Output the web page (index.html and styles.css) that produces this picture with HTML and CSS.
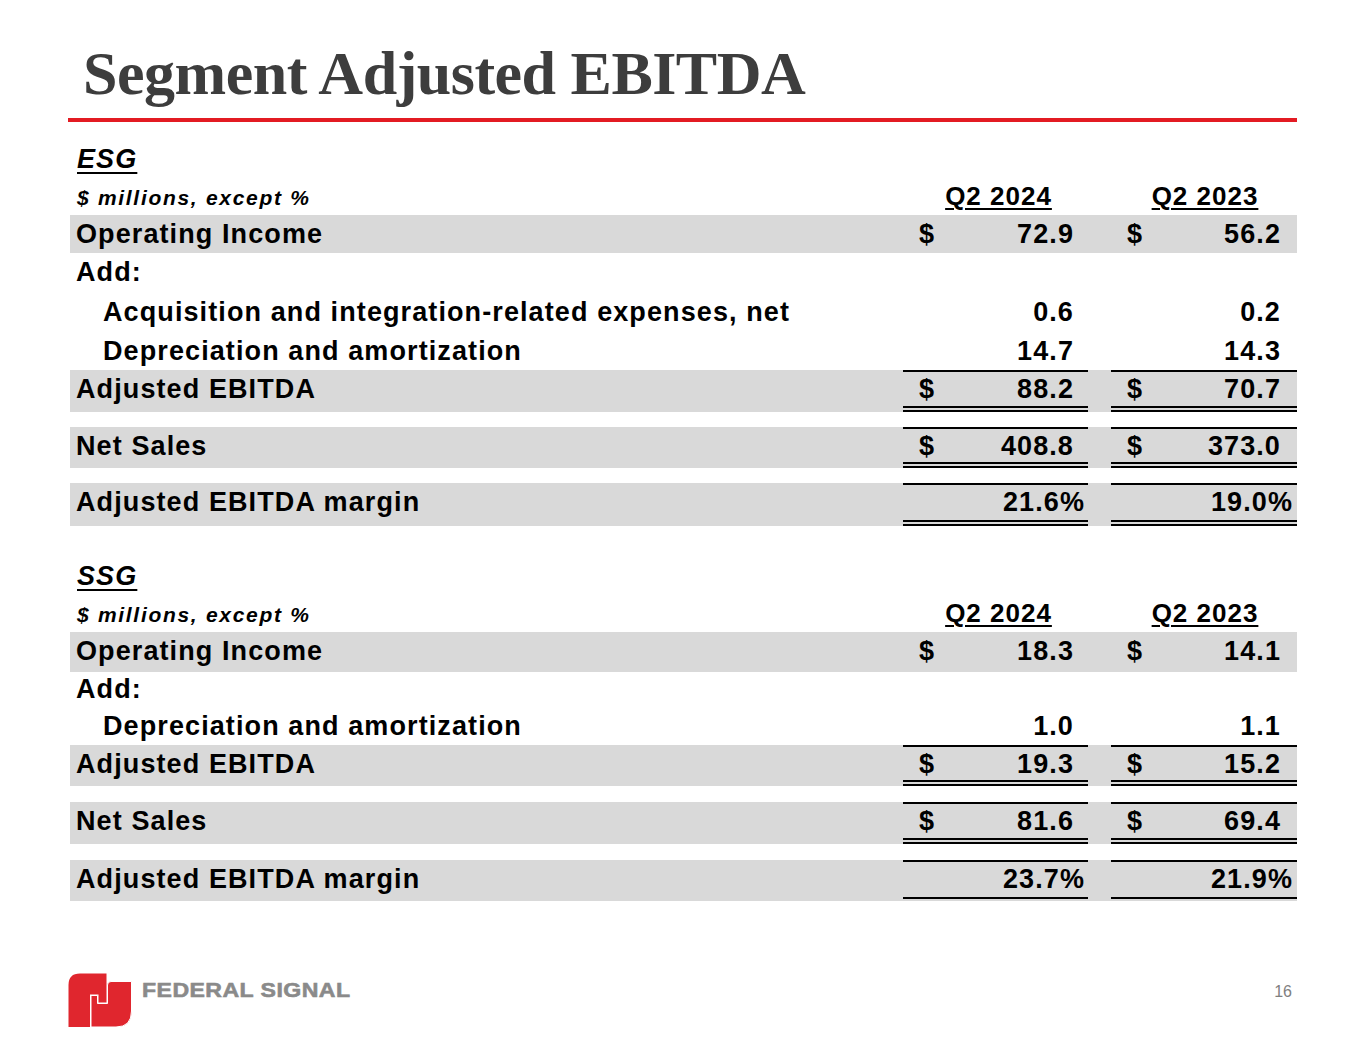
FILE: index.html
```html
<!DOCTYPE html>
<html>
<head>
<meta charset="utf-8">
<link rel="stylesheet" href="styles.css">
</head>
<body>
<div class="slide">
  <h1 class="title">Segment Adjusted EBITDA</h1>
  <div class="rule"></div>

  <section class="seg esg">
    <div class="row seg-name"><span class="name">ESG</span></div>
    <div class="row head">
      <div class="label unit">$ millions, except %</div>
      <div class="col hcol"><span class="hdr">Q2 2024</span></div>
      <div class="col hcol c2"><span class="hdr">Q2 2023</span></div>
    </div>
    <div class="row gray h38">
      <div class="label">Operating Income</div>
      <div class="col"><span class="cur">$</span><span class="num">72.9</span></div>
      <div class="col c2"><span class="cur">$</span><span class="num">56.2</span></div>
    </div>
    <div class="row h38">
      <div class="label">Add:</div>
      <div class="col"></div>
      <div class="col c2"></div>
    </div>
    <div class="row h41">
      <div class="label ind mid">Acquisition and integration-related expenses, net</div>
      <div class="col mid"><span class="num">0.6</span></div>
      <div class="col c2 mid"><span class="num">0.2</span></div>
    </div>
    <div class="row h38">
      <div class="label ind">Depreciation and amortization</div>
      <div class="col"><span class="num">14.7</span></div>
      <div class="col c2"><span class="num">14.3</span></div>
    </div>
    <div class="row gray h42 total">
      <div class="label">Adjusted EBITDA</div>
      <div class="col"><span class="cur">$</span><span class="num">88.2</span></div>
      <div class="col c2"><span class="cur">$</span><span class="num">70.7</span></div>
    </div>
    <div class="row gray h41 total gap">
      <div class="label">Net Sales</div>
      <div class="col"><span class="cur">$</span><span class="num">408.8</span></div>
      <div class="col c2"><span class="cur">$</span><span class="num">373.0</span></div>
    </div>
    <div class="row gray h43 total gap">
      <div class="label">Adjusted EBITDA margin</div>
      <div class="col pct"><span class="num">21.6%</span></div>
      <div class="col c2 pct"><span class="num">19.0%</span></div>
    </div>
  </section>

  <section class="seg ssg">
    <div class="row seg-name"><span class="name">SSG</span></div>
    <div class="row head">
      <div class="label unit">$ millions, except %</div>
      <div class="col hcol"><span class="hdr">Q2 2024</span></div>
      <div class="col hcol c2"><span class="hdr">Q2 2023</span></div>
    </div>
    <div class="row gray h40">
      <div class="label">Operating Income</div>
      <div class="col"><span class="cur">$</span><span class="num">18.3</span></div>
      <div class="col c2"><span class="cur">$</span><span class="num">14.1</span></div>
    </div>
    <div class="row h35">
      <div class="label short">Add:</div>
      <div class="col"></div>
      <div class="col c2"></div>
    </div>
    <div class="row h38">
      <div class="label ind">Depreciation and amortization</div>
      <div class="col"><span class="num">1.0</span></div>
      <div class="col c2"><span class="num">1.1</span></div>
    </div>
    <div class="row gray h41 total">
      <div class="label">Adjusted EBITDA</div>
      <div class="col"><span class="cur">$</span><span class="num">19.3</span></div>
      <div class="col c2"><span class="cur">$</span><span class="num">15.2</span></div>
    </div>
    <div class="row gray h42 total gap16">
      <div class="label">Net Sales</div>
      <div class="col"><span class="cur">$</span><span class="num">81.6</span></div>
      <div class="col c2"><span class="cur">$</span><span class="num">69.4</span></div>
    </div>
    <div class="row gray h41 total single gap16">
      <div class="label">Adjusted EBITDA margin</div>
      <div class="col pct"><span class="num">23.7%</span></div>
      <div class="col c2 pct"><span class="num">21.9%</span></div>
    </div>
  </section>

  <footer class="footer">
    <svg class="mark" width="66" height="54" viewBox="0 0 66 54">
      <path d="M1.5,54 V12 Q1.5,0.5 13,0.5 H39.5 V29.5 H31.5 V21.5 H23 V54 Z" fill="#e0262e"/>
      <path d="M24,54 V22.5 H30.5 V30.5 H40.5 V12 Q40.5,8.5 44,8.5 H64.5 V38 Q64.5,54 49,54 Z" fill="#e0262e" stroke="#ffffff" stroke-width="1"/>
    </svg>
    <span class="brand">FEDERAL SIGNAL</span>
    <span class="page">16</span>
  </footer>
</div>
</body>
</html>
```
FILE: styles.css
```css
* { box-sizing: border-box; }
html, body { margin: 0; padding: 0; background: #ffffff; }
.slide {
  width: 1365px;
  height: 1055px;
  display: flex;
  flex-direction: column;
  overflow: hidden;
  font-family: "Liberation Sans", Arial, sans-serif;
  color: #000;
}
.title {
  margin: 0;
  padding: 41px 0 0 83px;
  font-family: "Liberation Serif", "Times New Roman", serif;
  font-weight: bold;
  font-size: 62px;
  line-height: 64px;
  letter-spacing: -0.5px;
  color: #3d3d3d;
}
.rule {
  margin: 13px 0 0 68px;
  width: 1229px;
  height: 4px;
  background: #e31b23;
}
.seg {
  margin-left: 70px;
  width: 1227px;
  display: flex;
  flex-direction: column;
}
.esg { margin-top: 18px; }
.ssg { margin-top: 31px; }
.row {
  display: flex;
  align-items: stretch;
  font-weight: bold;
  font-size: 27px;
  letter-spacing: 1.1px;
}
.row.gray { background: #d9d9d9; }
.h35 { height: 35px; }
.h38 { height: 38px; }
.h40 { height: 40px; }
.h41 { height: 41px; }
.h42 { height: 42px; }
.h43 { height: 43px; }
.gap { margin-top: 15px; }
.gap16 { margin-top: 16px; }
.seg-name { height: 38px; line-height: 38px; padding-left: 7px; }
.name {
  font-style: italic;
  text-decoration: underline;
  text-decoration-thickness: 2px;
  text-underline-offset: 4px;
}
.head { height: 37px; }
.label {
  width: 833px;
  padding-left: 6px;
  line-height: 38px;
  white-space: nowrap;
}
.label.ind { padding-left: 33px; }
.label.mid { line-height: 42px; }
.label.short { line-height: 35px; }
.label.unit {
  font-style: italic;
  font-size: 21px;
  letter-spacing: 1.7px;
  line-height: 40px;
  padding-left: 7px;
}
.col {
  width: 185px;
  display: flex;
  justify-content: space-between;
  align-items: flex-start;
  padding: 0 14px 0 16px;
  line-height: 38px;
}
.col.c2 {
  width: 186px;
  margin-left: 23px;
  padding: 0 16px 0 16px;
}
.col.mid { line-height: 42px; }
.num { margin-left: auto; }
.col.pct { padding-right: 3px; }
.col.c2.pct { padding-right: 4px; }
.hcol {
  justify-content: center;
  padding: 0 0 0 6px;
  line-height: 36px;
  font-size: 26px;
}
.hcol.c2 { padding: 0 0 0 2px; }
.hdr {
  letter-spacing: 1px;
  text-decoration: underline;
  text-decoration-thickness: 2px;
  text-underline-offset: 3px;
}
.total .col {
  border-top: 2px solid #000;
  border-bottom: 6px double #000;
  line-height: 34px;
}
.total.single .col {
  border-bottom: 2px solid #000;
  height: 39px;
  line-height: 35px;
}
.footer {
  margin-top: auto;
  display: flex;
  align-items: flex-start;
  padding: 0 73px 28px 67px;
}
.mark { display: block; flex: none; }
.brand {
  display: inline-block;
  margin: 6px 0 0 9px;
  font-family: "Liberation Sans", Arial, sans-serif;
  font-weight: bold;
  font-size: 21px;
  line-height: 21px;
  letter-spacing: 0.4px;
  color: #8a8a8a;
  -webkit-text-stroke: 0.6px #8a8a8a;
  transform: scaleX(1.1);
  transform-origin: left center;
}
.page {
  margin: 11px 0 0 auto;
  font-family: "Liberation Sans", Arial, sans-serif;
  font-size: 16px;
  line-height: 16px;
  color: #7f7f7f;
}
```
